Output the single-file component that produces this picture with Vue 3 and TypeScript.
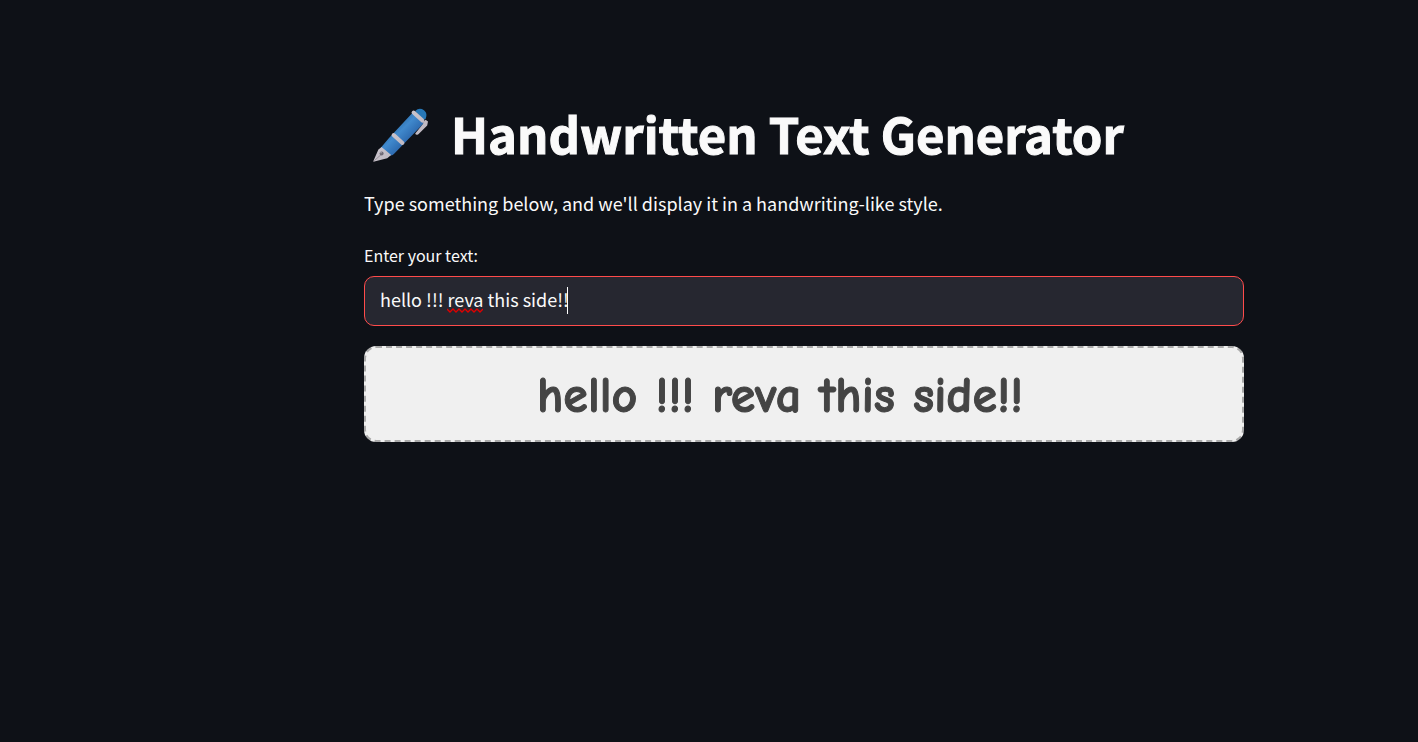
<script setup lang="ts">
import { ref } from 'vue'

const initialText: string = 'hello !!! reva this side!!'
const text = ref<string>(initialText)
const editing = ref<boolean>(false)
</script>

<template>
  <main class="page">
    <div class="content">
      <h1 class="title">
        <svg class="pen" viewBox="0 0 90 90" aria-hidden="true">
          <defs>
            <linearGradient id="barrel" gradientUnits="userSpaceOnUse" x1="34" y1="34" x2="54" y2="54">
              <stop offset="0" stop-color="#286ba6" />
              <stop offset="0.45" stop-color="#4089cd" />
              <stop offset="1" stop-color="#2c68ad" />
            </linearGradient>
            <linearGradient id="metal" gradientUnits="userSpaceOnUse" x1="0" y1="0" x2="80" y2="80">
              <stop offset="0" stop-color="#bcb6bf" />
              <stop offset="0.5" stop-color="#c9c3cb" />
              <stop offset="1" stop-color="#b0aab4" />
            </linearGradient>
          </defs>
          <path d="M64 15 Q69 10 75 14 Q80 18 77 25 L73 27Z" fill="#2677b6" />
          <path d="M61 17 L75 30 L38 68 Q34 73 28 68 L21 61 L31 49Z" fill="url(#barrel)" />
          <path d="M22 60 L34 70 L29 74 L13 78 Q11 79 12 77 L18 63Z" fill="url(#metal)" />
          <path d="M13 77 L22 69" stroke="#8b8791" stroke-width="1" />
          <circle cx="22" cy="68" r="2.5" fill="#706b76" />
          <circle cx="21.3" cy="67" r="1" fill="#aaa5ae" />
          <path d="M37 45 L48 55" stroke="url(#metal)" stroke-width="5" stroke-linecap="round" />
          <path d="M62 17 L73 27" stroke="url(#metal)" stroke-width="5" stroke-linecap="round" />
          <path d="M74 29 L77 26 L80 28 L79 33 L68 44 Q65 46 64 43 L74 31Z" fill="url(#metal)" />
        </svg>
        <span class="title-text">Handwritten Text Generator</span>
      </h1>
      <p class="intro">Type something below, and we'll display it in a handwriting-like style.</p>
      <label class="label" for="source-text">Enter your text:</label>
      <div class="field">
        <input
          id="source-text"
          v-model="text"
          class="input"
          type="text"
          @focus="editing = true"
          @blur="editing = false"
        />
        <template v-if="!editing && text === initialText">
          <svg class="squiggle" viewBox="0 0 36 5" aria-hidden="true">
            <path d="M0 1 L3 4 L6 1 L9 4 L12 1 L15 4 L18 1 L21 4 L24 1 L27 4 L30 1 L33 4 L36 1" />
          </svg>
          <span class="caret" aria-hidden="true"></span>
        </template>
      </div>
      <output class="preview" for="source-text">{{ text }}</output>
    </div>
  </main>
</template>

<style>
body {
  background: #0e1117;
}
</style>

<style scoped>
.page {
  box-sizing: border-box;
  min-height: 100vh;
  padding: 98px 24px 48px 214px;
  background: #0e1117;
  color: #fafafa;
  font-family: "Source Sans Pro", "Noto Sans CJK SC", sans-serif;
}

.content {
  max-width: 880px;
  margin: 0 auto;
}

.title {
  display: flex;
  align-items: center;
  gap: 15px;
  margin: 0;
  font-size: 49px;
  font-weight: 700;
  line-height: 70px;
}

.title-text {
  padding-bottom: 4px;
  -webkit-text-stroke: 1px #fafafa;
}

.pen {
  width: 72px;
  height: 72px;
  flex: none;
}

.intro {
  margin: 16px 0 0;
  font-size: 18px;
  line-height: 30px;
}

.label {
  display: block;
  margin: 23px 0 6px;
  font-size: 16px;
  line-height: 29px;
}

.field {
  position: relative;
}

.input {
  display: block;
  box-sizing: border-box;
  width: 100%;
  height: 50px;
  padding: 0 15px 4px;
  border: 1px solid #ff4b4b;
  border-radius: 10px;
  outline: none;
  background: #262730;
  color: #fafafa;
  caret-color: #fafafa;
  font-family: inherit;
  font-size: 18px;
}

.squiggle {
  position: absolute;
  left: 83px;
  top: 32px;
  width: 36px;
  height: 5px;
  pointer-events: none;
}

.squiggle path {
  fill: none;
  stroke: #e00000;
  stroke-width: 1.3;
}

.caret {
  position: absolute;
  left: 203px;
  top: 11px;
  width: 1px;
  height: 27px;
  background: #ffffff;
}

.preview {
  display: block;
  box-sizing: border-box;
  min-height: 96px;
  margin-top: 20px;
  padding: 20px 68px 16px 20px;
  border: 2px dashed #aaaaaa;
  border-radius: 12px;
  background: #f0f0f0;
  color: #444444;
  font-family: "Comic Sans MS", "Comic Neue", "Noto Sans", sans-serif;
  font-size: 50px;
  font-weight: 700;
  line-height: 56px;
  text-align: center;
  overflow-wrap: anywhere;
  -webkit-text-stroke: 1px #444444;
}
</style>
